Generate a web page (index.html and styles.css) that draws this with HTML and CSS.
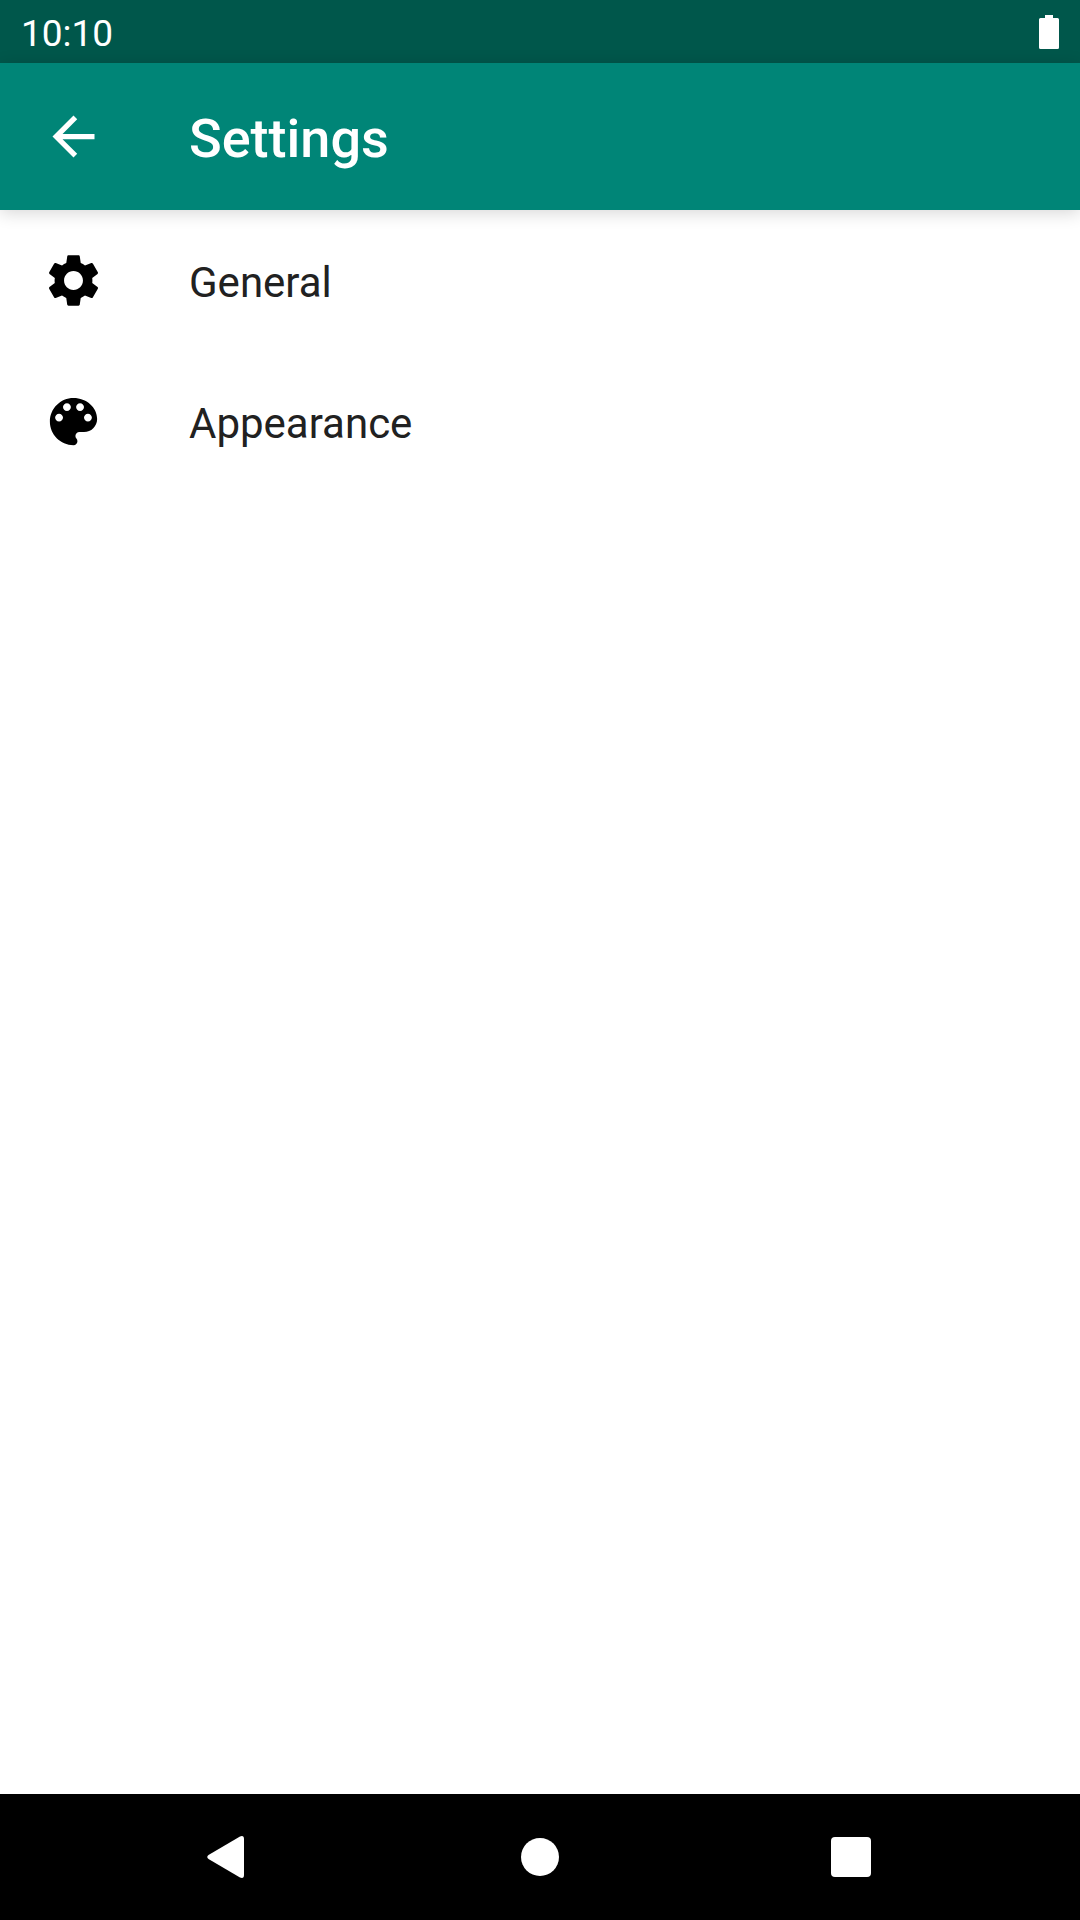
FILE: index.html
```html
<!DOCTYPE html>
<html lang="en">
<head>
  <meta charset="utf-8">
  <meta name="viewport" content="width=device-width, initial-scale=1">
  <title>Settings</title>
  <link rel="stylesheet" href="styles.css">
</head>
<body>
  <div class="status-bar">
    <time class="clock">10:10</time>
    <svg class="battery" viewBox="0 0 20 34" role="img" aria-label="Battery full">
      <path d="M6 0h8v3h4.500a1.500 1.500 0 0 1 1.500 1.500v28a1.500 1.500 0 0 1-1.500 1.500h-17a1.500 1.500 0 0 1-1.500-1.500v-28A1.500 1.500 0 0 1 1.500 3H6z"/>
    </svg>
  </div>
  <header class="app-bar">
    <button class="up-button" type="button" aria-label="Navigate up">
      <svg class="icon" viewBox="0 0 24 24" aria-hidden="true"><path d="M20 11H7.83l5.59-5.59L12 4l-8 8 8 8 1.41-1.41L7.83 13H20v-2z"/></svg>
    </button>
    <h1 class="title">Settings</h1>
  </header>
  <main class="content">
    <a class="preference" href="#general">
      <svg class="icon" viewBox="0 0 24 24" aria-hidden="true"><path d="M19.14 12.94c.04-.3.06-.61.06-.94 0-.32-.02-.64-.07-.94l2.03-1.58c.18-.14.23-.41.12-.61l-1.92-3.32c-.12-.22-.37-.29-.59-.22l-2.39.96c-.5-.38-1.03-.7-1.62-.94l-.36-2.54c-.04-.24-.24-.41-.48-.41h-3.84c-.24 0-.43.17-.47.41l-.36 2.54c-.59.24-1.13.57-1.62.94l-2.39-.96c-.22-.08-.47 0-.59.22L2.74 8.87c-.12.21-.08.47.12.61l2.03 1.58c-.05.3-.09.63-.09.94s.02.64.07.94l-2.03 1.58c-.18.14-.23.41-.12.61l1.92 3.32c.12.22.37.29.59.22l2.39-.96c.5.38 1.03.7 1.62.94l.36 2.54c.05.24.24.41.48.41h3.84c.24 0 .44-.17.47-.41l.36-2.54c.59-.24 1.13-.56 1.62-.94l2.39.96c.22.08.47 0 .59-.22l1.92-3.32c.12-.22.07-.47-.12-.61l-2.01-1.58zM12 15.6c-1.98 0-3.6-1.62-3.6-3.6s1.62-3.6 3.6-3.6 3.6 1.62 3.6 3.6-1.62 3.6-3.6 3.6z"/></svg>
      <span class="label">General</span>
    </a>
    <a class="preference" href="#appearance">
      <svg class="icon" viewBox="0 0 24 24" aria-hidden="true"><path d="M12 3c-4.970 0-9 4.030-9 9s4.030 9 9 9c.83 0 1.500-.67 1.500-1.500 0-.39-.15-.74-.39-1.010-.23-.26-.38-.61-.38-.99 0-.83.67-1.500 1.500-1.500H16c2.760 0 5-2.240 5-5 0-4.420-4.030-8-9-8zm-5.500 9c-.83 0-1.500-.67-1.500-1.500S5.670 9 6.500 9 8 9.670 8 10.500 7.330 12 6.500 12zm3-4C8.670 8 8 7.330 8 6.500S8.670 5 9.500 5s1.500.67 1.500 1.500S10.330 8 9.500 8zm5 0c-.83 0-1.500-.67-1.500-1.500S13.670 5 14.500 5s1.500.67 1.500 1.500S15.330 8 14.500 8zm3 4c-.83 0-1.500-.67-1.500-1.500S16.670 9 17.500 9s1.500.67 1.500 1.500-.67 1.500-1.500 1.500z"/></svg>
      <span class="label">Appearance</span>
    </a>
  </main>
  <nav class="nav-bar" aria-label="System navigation">
    <button class="nav-button" type="button" aria-label="Back">
      <svg class="nav-icon" viewBox="0 0 44 44" aria-hidden="true"><path d="M1.500 20 33 1.500Q37 0 37 4v36Q37 44 33 42.500L1.500 24Q-1 22 1.500 20z"/></svg>
    </button>
    <button class="nav-button" type="button" aria-label="Home">
      <svg class="nav-icon" viewBox="0 0 44 44" aria-hidden="true"><circle cx="22" cy="22" r="19"/></svg>
    </button>
    <button class="nav-button" type="button" aria-label="Overview">
      <svg class="nav-icon" viewBox="0 0 44 44" aria-hidden="true"><rect x="2" y="2" width="40" height="40" rx="4"/></svg>
    </button>
  </nav>
</body>
</html>
```
FILE: styles.css
```css
* {
  box-sizing: border-box;
}

body {
  display: flex;
  flex-direction: column;
  min-height: 100vh;
  margin: 0;
  background: #fff;
  color: #212121;
  font-family: Roboto, "Liberation Sans", sans-serif;
}

button {
  padding: 0;
  border: 0;
  background: none;
  color: inherit;
}

svg {
  display: block;
  fill: currentColor;
}

.status-bar {
  display: flex;
  align-items: center;
  justify-content: space-between;
  height: 63px;
  padding: 0 21px;
  background: #00574b;
  color: #fff;
}

.clock,
.title,
.label {
  padding-top: 4px;
}

.clock {
  font-size: 37px;
  line-height: 44px;
}

.battery {
  width: 20px;
  height: 34px;
}

.app-bar {
  display: flex;
  align-items: center;
  gap: 42px;
  height: 147px;
  background: #008577;
  color: #fff;
  box-shadow: 0 3px 16px rgba(0, 0, 0, 0.16);
}

.up-button {
  display: grid;
  place-items: center;
  width: 147px;
  height: 147px;
}

.icon {
  width: 63px;
  height: 63px;
}

.title {
  margin: 0;
  font-size: 54px;
  font-weight: 500;
  line-height: 62px;
}

.content {
  flex: 1;
}

.preference {
  display: flex;
  align-items: center;
  gap: 84px;
  height: 141px;
  padding: 0 42px;
  color: inherit;
  font-size: 42px;
  line-height: 50px;
  text-decoration: none;
}

.preference .icon {
  color: #000;
}

.nav-bar {
  display: flex;
  justify-content: center;
  gap: 101px;
  height: 126px;
  background: #000;
  color: #fff;
}

.nav-button {
  display: grid;
  place-items: center;
  width: 210px;
}

.nav-icon {
  width: 44px;
  height: 44px;
}
```
